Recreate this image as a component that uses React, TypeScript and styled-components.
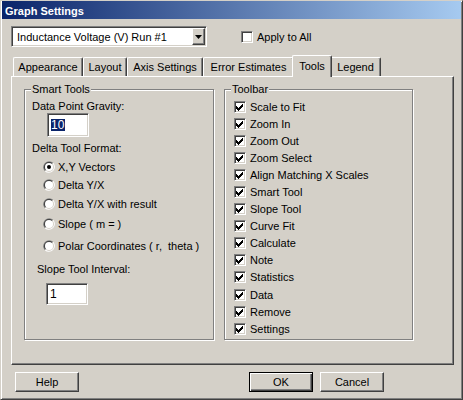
import React from 'react';
import styled, { createGlobalStyle, css } from 'styled-components';

const GlobalStyle = createGlobalStyle`
  html, body { margin: 0; padding: 0; background: #d4d0c8; }
  body {
    font-family: "Liberation Sans", Arial, sans-serif;
    font-size: 11px;
    color: #000;
  }
  * { box-sizing: border-box; }
`;

const sunken = css`
  border: 1px solid;
  border-color: #808080 #fff #fff #808080;
  box-shadow: inset 1px 1px #404040, inset -1px -1px #d4d0c8;
  background: #fff;
`;

const raised = css`
  border: 1px solid;
  border-color: #fff #404040 #404040 #fff;
  box-shadow: inset -1px -1px #808080;
  background: #d4d0c8;
`;

const Window = styled.div`
  width: 463px;
  height: 400px;
  background: #d4d0c8;
  border: 1px solid;
  border-color: #d4d0c8 #404040 #404040 #d4d0c8;
  box-shadow: inset 1px 1px #fff, inset -1px -1px #808080;
  padding: 0 1px 1px 1px;
  display: flex;
  flex-direction: column;
`;

const TitleBar = styled.div`
  height: 18px;
  background: linear-gradient(to right, #0a246a, #a6caf0);
  color: #fff;
  font-weight: bold;
  font-size: 11px;
  display: flex;
  align-items: center;
  padding: 1px 0 0 3px;
`;

const Body = styled.div`
  display: flex;
  flex-direction: column;
  padding: 7px 0 0 9px;
`;

const TopRow = styled.div`
  display: flex;
  align-items: center;
  height: 21px;
`;

const Combo = styled.div`
  ${sunken};
  width: 196px;
  height: 21px;
  padding: 1px;
  display: flex;
`;

const ComboText = styled.div`
  flex: 1;
  padding-left: 4px;
  display: flex;
  align-items: center;
  white-space: nowrap;
`;

const ComboButton = styled.div`
  ${raised};
  width: 13px;
  display: flex;
  align-items: center;
  justify-content: center;
`;

const CheckLabel = styled.label<{ $ml?: number }>`
  display: flex;
  align-items: center;
  gap: 4px;
  margin-left: ${p => p.$ml ?? 0}px;
  white-space: nowrap;
`;

const CheckBoxBox = styled.span`
  ${sunken};
  width: 12px;
  height: 12px;
  display: inline-flex;
  align-items: center;
  justify-content: center;
  flex: none;
`;

const TabRow = styled.div`
  display: flex;
  align-items: flex-end;
  height: 21px;
  margin: 8px 0 0 2px;
`;

const Tab = styled.div<{ $w: number; $active?: boolean }>`
  width: ${p => p.$w}px;
  background: #d4d0c8;
  border-top: 1px solid #fff;
  border-left: 1px solid #fff;
  border-right: 1px solid #404040;
  border-radius: 2px 2px 0 0;
  box-shadow: inset -1px 0 #808080;
  display: flex;
  align-items: center;
  justify-content: center;
  white-space: nowrap;
  ${p =>
    p.$active
      ? css`
          height: 22px;
          margin: 0 -2px -1px -2px;
          padding-bottom: 2px;
          position: relative;
          z-index: 1;
        `
      : css`
          height: 19px;
        `}
`;

const Panel = styled.div`
  width: 443px;
  height: 289px;
  border: 1px solid;
  border-color: #fff #404040 #404040 #fff;
  box-shadow: inset -1px -1px #808080;
  padding: 12px 0 0 12px;
  display: flex;
  gap: 10px;
`;

const Group = styled.div<{ $w: number }>`
  position: relative;
  width: ${p => p.$w}px;
  height: 251px;
  border: 1px solid #808080;
  box-shadow: inset 1px 1px #fff, 1px 1px #fff;
`;

const Legend = styled.span`
  position: absolute;
  top: -7px;
  left: 6px;
  padding: 0 1px;
  line-height: 13px;
  background: #d4d0c8;
`;

const SmartBody = styled.div`
  display: flex;
  flex-direction: column;
  align-items: flex-start;
  padding: 10px 0 0 7px;
`;

const FieldLabel = styled.div<{ $mt?: number; $ml?: number }>`
  line-height: 13px;
  margin-top: ${p => p.$mt ?? 0}px;
  margin-left: ${p => p.$ml ?? 0}px;
  white-space: nowrap;
`;

const TextField = styled.div<{ $h: number; $mt?: number; $ml: number }>`
  ${sunken};
  width: 42px;
  height: ${p => p.$h}px;
  margin-top: ${p => p.$mt ?? 0}px;
  margin-left: ${p => p.$ml}px;
  padding-left: 3px;
  display: flex;
  align-items: center;
  font-size: 12px;
`;

const Selected = styled.span`
  background: #0a246a;
  color: #fff;
  line-height: 12px;
  padding-right: 1px;
`;

const RadioRow = styled.label<{ $mt: number }>`
  display: flex;
  align-items: center;
  gap: 3px;
  height: 13px;
  margin: ${p => p.$mt}px 0 0 11px;
  white-space: pre;
`;

const ToolbarList = styled.div`
  display: grid;
  grid-auto-rows: 17.1px;
  padding: 8px 0 0 9px;
`;

const ButtonRow = styled.div`
  display: flex;
  margin-top: 7px;
  padding-left: 4px;
`;

const ButtonGroup = styled.div`
  display: flex;
  gap: 7px;
  margin-left: 170px;
`;

const Button = styled.button<{ $default?: boolean }>`
  width: 64px;
  height: 20px;
  padding: 0;
  font: inherit;
  color: #000;
  background: #d4d0c8;
  ${p =>
    p.$default
      ? css`
          border: 1px solid #000;
          box-shadow: inset 1px 1px #fff, inset -1px -1px #404040, inset -2px -2px #808080;
        `
      : raised};
`;

const CheckMark = () => (
  <svg width="10" height="10" viewBox="0 0 10 10" shapeRendering="crispEdges">
    <path d="M1 4 L3 6 L8 1 L8 4 L3 9 L1 7 Z" fill="#000" />
  </svg>
);

const CheckBox = ({ checked }: { checked: boolean }) => (
  <CheckBoxBox>{checked && <CheckMark />}</CheckBoxBox>
);

const Radio = ({ checked }: { checked?: boolean }) => (
  <svg width="12" height="12" viewBox="0 0 12 12">
    <path d="M1.76 10.24 A6 6 0 0 1 10.24 1.76 Z" fill="#808080" />
    <path d="M10.24 1.76 A6 6 0 0 1 1.76 10.24 Z" fill="#fff" />
    <path d="M2.46 9.54 A5 5 0 0 1 9.54 2.46 Z" fill="#404040" />
    <path d="M9.54 2.46 A5 5 0 0 1 2.46 9.54 Z" fill="#d4d0c8" />
    <circle cx="6" cy="6" r="4" fill="#fff" />
    {checked && <circle cx="6" cy="6" r="2" fill="#000" />}
  </svg>
);

const tabs = [
  { label: 'Appearance', w: 70 },
  { label: 'Layout', w: 44 },
  { label: 'Axis Settings', w: 76 },
  { label: 'Error Estimates', w: 91 },
  { label: 'Tools', w: 40, active: true },
  { label: 'Legend', w: 51 },
];

const radios = [
  { label: 'X,Y Vectors', mt: 5, checked: true },
  { label: 'Delta Y/X', mt: 5 },
  { label: 'Delta Y/X with result', mt: 6 },
  { label: 'Slope ( m = )', mt: 7 },
  { label: 'Polar Coordinates ( r,  theta )', mt: 9 },
];

const toolbarItems = [
  'Scale to Fit',
  'Zoom In',
  'Zoom Out',
  'Zoom Select',
  'Align Matching X Scales',
  'Smart Tool',
  'Slope Tool',
  'Curve Fit',
  'Calculate',
  'Note',
  'Statistics',
  'Data',
  'Remove',
  'Settings',
];

export default function App() {
  return (
    <>
      <GlobalStyle />
      <Window>
        <TitleBar>Graph Settings</TitleBar>
        <Body>
          <TopRow>
            <Combo>
              <ComboText>Inductance Voltage (V) Run #1</ComboText>
              <ComboButton>
                <svg width="7" height="4" viewBox="0 0 7 4">
                  <path d="M0 0 H7 L3.5 4 Z" fill="#000" />
                </svg>
              </ComboButton>
            </Combo>
            <CheckLabel $ml={34}>
              <CheckBox checked={false} />
              Apply to All
            </CheckLabel>
          </TopRow>
          <TabRow>
            {tabs.map(t => (
              <Tab key={t.label} $w={t.w} $active={t.active}>
                {t.label}
              </Tab>
            ))}
          </TabRow>
          <Panel>
            <Group $w={190}>
              <Legend>Smart Tools</Legend>
              <SmartBody>
                <FieldLabel>Data Point Gravity:</FieldLabel>
                <TextField $h={24} $ml={15}>
                  <Selected>10</Selected>
                </TextField>
                <FieldLabel $mt={5}>Delta Tool Format:</FieldLabel>
                {radios.map(r => (
                  <RadioRow key={r.label} $mt={r.mt}>
                    <Radio checked={r.checked} />
                    {r.label}
                  </RadioRow>
                ))}
                <FieldLabel $mt={11} $ml={5}>
                  Slope Tool Interval:
                </FieldLabel>
                <TextField $h={22} $mt={7} $ml={14}>
                  1
                </TextField>
              </SmartBody>
            </Group>
            <Group $w={189}>
              <Legend>Toolbar</Legend>
              <ToolbarList>
                {toolbarItems.map(item => (
                  <CheckLabel key={item}>
                    <CheckBox checked />
                    {item}
                  </CheckLabel>
                ))}
              </ToolbarList>
            </Group>
          </Panel>
          <ButtonRow>
            <Button>Help</Button>
            <ButtonGroup>
              <Button $default>OK</Button>
              <Button>Cancel</Button>
            </ButtonGroup>
          </ButtonRow>
        </Body>
      </Window>
    </>
  );
}
